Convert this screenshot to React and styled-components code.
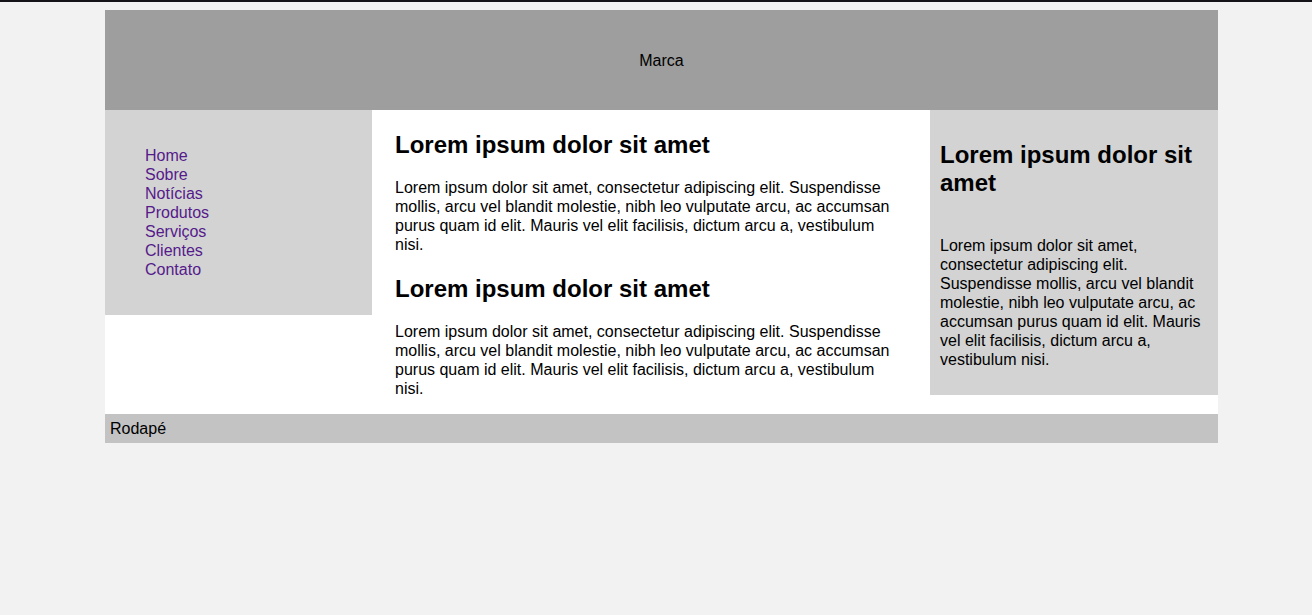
import React from "react"
import styled, { createGlobalStyle } from "styled-components"

const GlobalStyle = createGlobalStyle`
html { border-top: 2px solid #141418; background: #f2f2f2; }
body {
  margin: 8px 0;
  font-family: "Liberation Sans", Arial, sans-serif;
  font-size: 16px;
  line-height: 19px;
  color: #000;
}
`

const Page = styled.div`
width: 1113px;
margin-left: 105px;`

const Header = styled.header`
height: 100px;
background: #9e9e9e;
display: flex;
align-items: center;
justify-content: center;`

const Content = styled.div`
display: grid;
grid-template-columns: 267px 558px 288px;
align-items: start;
background: #fff;`

const Nav = styled.nav`
background: #d3d3d3;
padding: 20px;`

const NavList = styled.ul`
list-style: none;
margin: 16px 0;
padding-left: 20px;`

const NavLink = styled.a`
color: #551a8b;
text-decoration: none;`

const Main = styled.main`
padding: 0 23px;`

const Heading = styled.h2`
font-size: 24px;
line-height: 28px;
font-weight: bold;
margin: 21px 0 19px;`

const Text = styled.p`
margin: 16px 0;`

const Aside = styled.aside`
background: #d3d3d3;
padding: 10px;`

const AsideHeading = styled(Heading)`
margin-bottom: 39px;`

const Footer = styled.footer`
background: #c3c3c3;
padding: 5px;`

const lorem = "Lorem ipsum dolor sit amet, consectetur adipiscing elit. Suspendisse mollis, arcu vel blandit molestie, nibh leo vulputate arcu, ac accumsan purus quam id elit. Mauris vel elit facilisis, dictum arcu a, vestibulum nisi."

const links = ["Home", "Sobre", "Notícias", "Produtos", "Serviços", "Clientes", "Contato"]

const App = () => {
  return (
    <>
      <GlobalStyle />
      <Page>
        <Header>Marca</Header>
        <Content>
          <Nav>
            <NavList>
              {links.map(l => <li key={l}><NavLink href="#">{l}</NavLink></li>)}
            </NavList>
          </Nav>
          <Main>
            <Heading>Lorem ipsum dolor sit amet</Heading>
            <Text>{lorem}</Text>
            <Heading>Lorem ipsum dolor sit amet</Heading>
            <Text>{lorem}</Text>
          </Main>
          <Aside>
            <AsideHeading>Lorem ipsum dolor sit amet</AsideHeading>
            <Text>{lorem}</Text>
          </Aside>
        </Content>
        <Footer>Rodapé</Footer>
      </Page>
    </>
  )
}
export default App
